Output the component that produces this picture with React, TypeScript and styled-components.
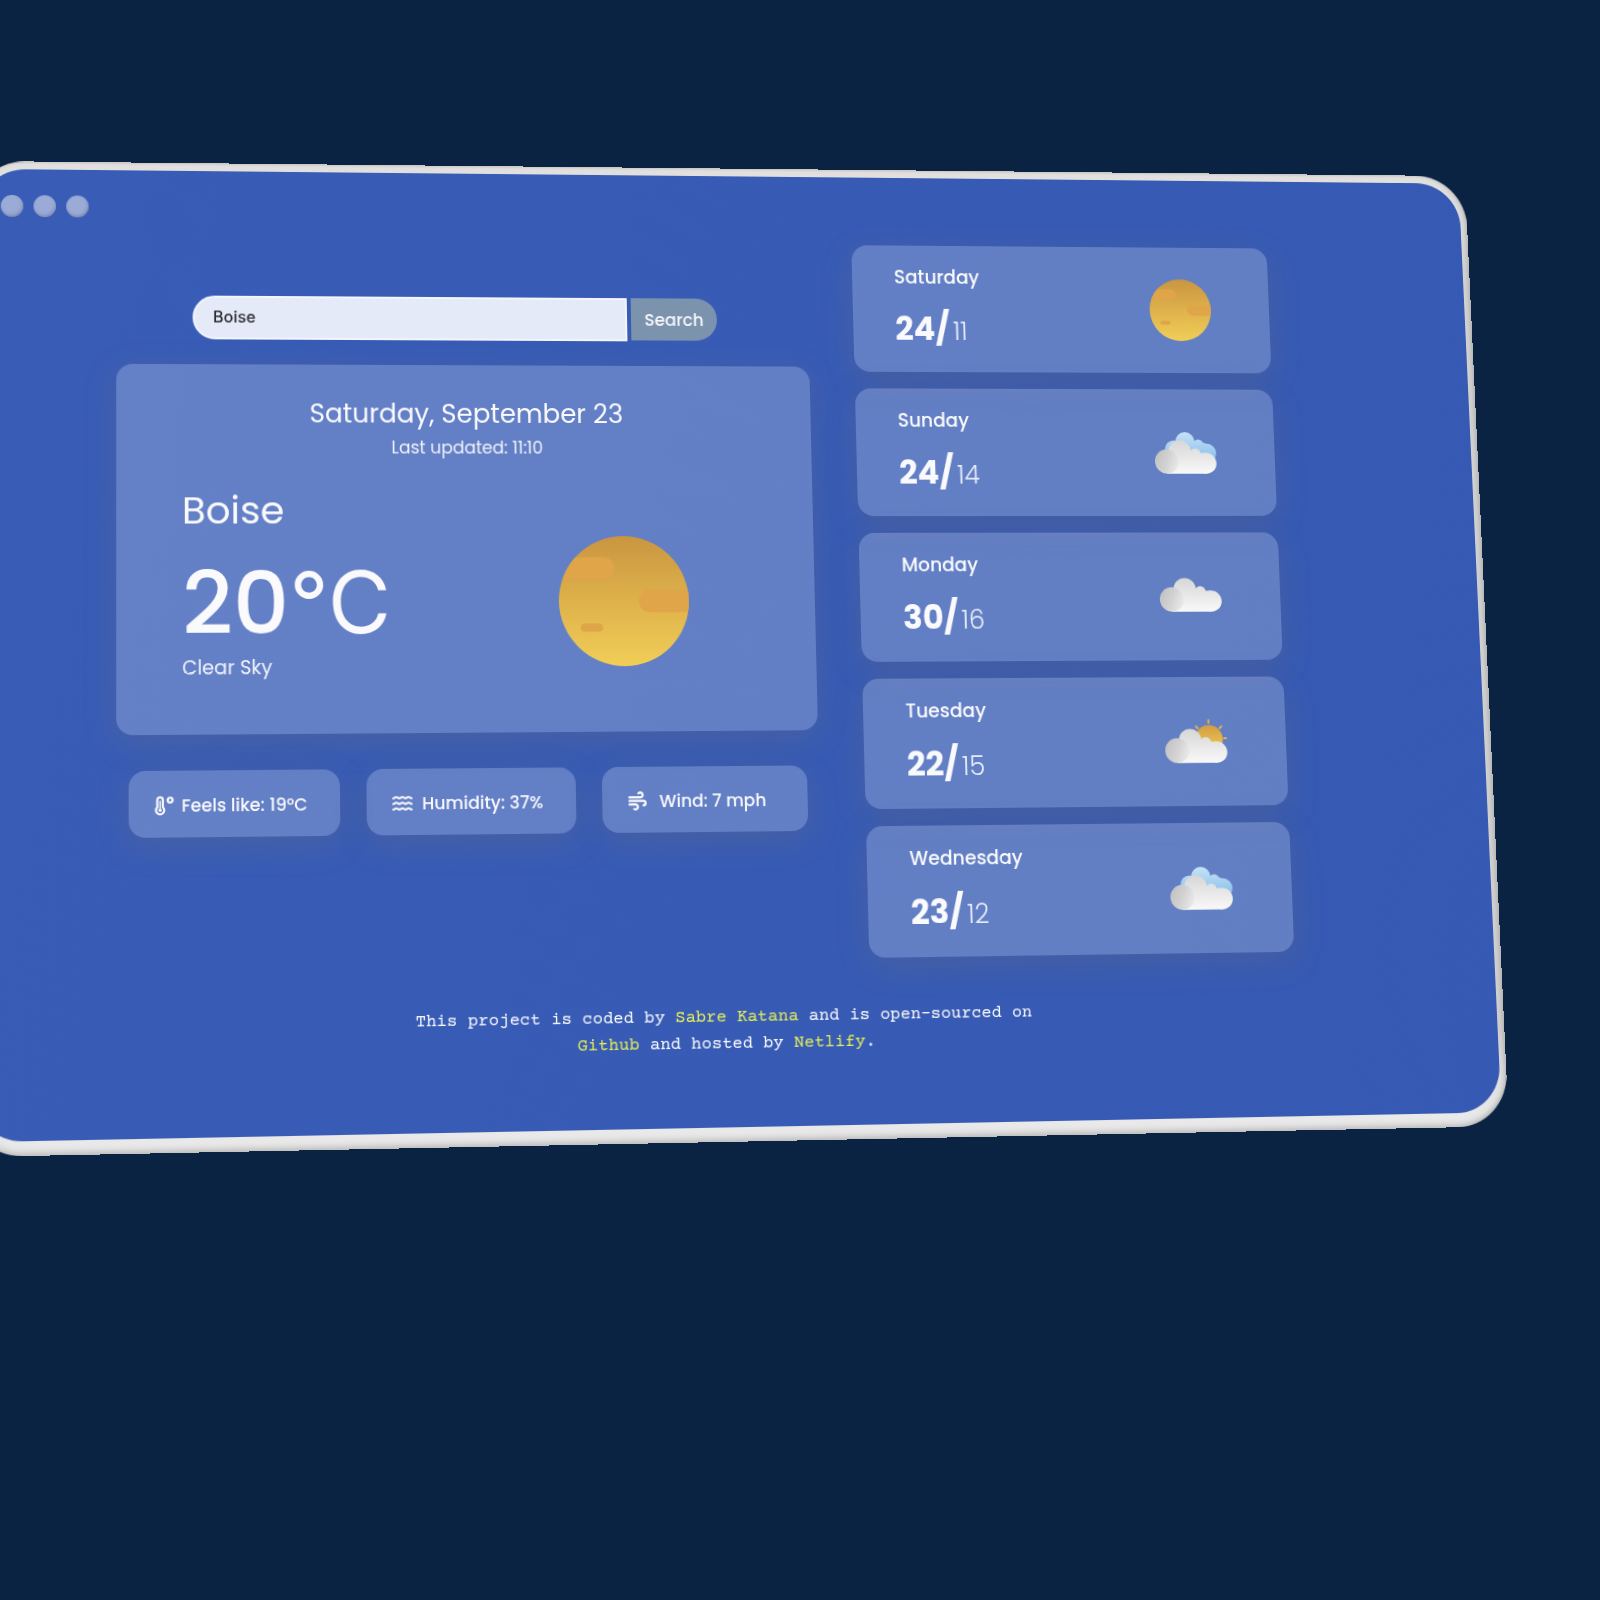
import React from "react";
import styled, { createGlobalStyle } from "styled-components";

const GlobalStyle = createGlobalStyle`
  *, *::before, *::after { box-sizing: border-box; }
  html, body { margin: 0; min-height: 100%; background: #0a2342; }
  body {
    overflow-x: hidden;
    font-family: Poppins, Inter, "Open Sans", sans-serif;
    color: #fafafc;
  }
  h1, h2, p, dl, dd, dt, ul { margin: 0; padding: 0; font-weight: 400; }
`;

/* Stage clips the tilted browser mockup where it leaves the page. */
const Stage = styled.div`
  overflow: hidden;
  padding-bottom: 80px;
`;

const Bezel = styled.div`
  margin: 161px 92px 0 -18px;
  padding: 8px 7px 14px;
  border-radius: 53px;
  background: linear-gradient(to bottom, #e2e1e0, #d3d3d3 10%, #d0d0d0 90%, #ececec);
  box-shadow:
    inset -3px 0 4px -1px rgba(120, 120, 120, 0.3),
    inset 0 -6px 6px -3px rgba(90, 90, 90, 0.3),
    inset 0 2px 2px -1px rgba(110, 110, 110, 0.2);
  transform-origin: 640px 439px;
  transform: matrix3d(
    1, -0.0032, 0, 0.000031,
    0.0172, 1, 0, -0.0000339,
    0, 0, 1, 0,
    0, 0, 0, 1
  );
`;

const Screen = styled.div`
  display: flex;
  flex-direction: column;
  border-radius: 46px;
  background: linear-gradient(100deg, #395db7, #365ab3);
  padding-bottom: 67px;
`;

const TitleBar = styled.div`
  display: flex;
  gap: 10px;
  padding: 26px 22px 0;
`;

const Dot = styled.span`
  width: 22px;
  height: 22px;
  border-radius: 50%;
  background: #9babd8;
  box-shadow: inset -1px -2px 3px rgba(110, 115, 150, 0.5);
`;

const Dashboard = styled.main`
  display: grid;
  grid-template-columns: 692fr 432fr;
  gap: 46px;
  padding: 22px 207px 0 135px;
`;

const glass = `
  border-radius: 16px;
  background: rgba(255, 255, 255, 0.22);
  box-shadow: 0 8px 32px rgba(130, 115, 95, 0.22);
`;

const Current = styled.section`
  padding-top: 56px;
`;

const SearchForm = styled.form`
  display: flex;
  gap: 4px;
  margin: 0 93px 25px 75px;
`;

const SearchInput = styled.input`
  flex: 1;
  min-width: 0;
  height: 44px;
  padding: 0 18px 2px;
  border: 2px solid #f3f5fa;
  border-radius: 22px 0 0 22px;
  background: #e4eaf7;
  color: #2c2c2e;
  font: 500 16px Inter, sans-serif;
  outline: none;
`;

const SearchButton = styled.button`
  width: 87px;
  height: 43px;
  padding: 0;
  border: 0;
  border-radius: 0 22px 22px 0;
  background: #7c93ae;
  color: #f4f6fa;
  font: inherit;
  font-size: 17px;
  font-weight: 500;
`;

const CurrentCard = styled.article`
  ${glass}
  padding: 31px 64px 51px;
`;

const DateLine = styled.h2`
  font-size: 26px;
  line-height: 36px;
  text-align: center;
`;

const Updated = styled.p`
  margin-top: 4px;
  font-size: 17px;
  line-height: 24px;
  text-align: center;
  color: #f0f3fa;
`;

const Hero = styled.div`
  display: flex;
  align-items: center;
  justify-content: space-between;
  margin-top: 27px;
  padding-right: 63px;
`;

const City = styled.h1`
  font-size: 38px;
  line-height: 48px;
`;

const Temperature = styled.p`
  margin-top: 20px;
  font-size: 86px;
  font-weight: 500;
  line-height: 96px;
`;

const Unit = styled.span`
  font-family: Inter, sans-serif;
  font-size: 85px;
  font-weight: 400;
  line-height: 1;
`;

const Sky = styled.p`
  margin-top: 2px;
  font-size: 19px;
  line-height: 28px;
  color: #f0f3fa;
`;

const HeroIcon = styled.div`
  margin-top: 36px;
  svg { display: block; width: 130px; height: 130px; }
`;

const Details = styled.ul`
  display: grid;
  grid-template-columns: repeat(3, 1fr);
  gap: 26px;
  margin-top: 35px;
  padding: 0 12px;
  list-style: none;
`;

const Detail = styled.li<{ $gap: number }>`
  ${glass}
  display: flex;
  align-items: center;
  gap: ${(p) => p.$gap}px;
  height: 65px;
  padding: 2px 0 0 25px;
  font-size: 17px;
  font-weight: 500;
  white-space: nowrap;
  svg { flex: none; width: 20px; height: 20px; }
`;

const Forecast = styled.section`
  display: flex;
  flex-direction: column;
  gap: 17px;
`;

const DayCard = styled.article`
  ${glass}
  display: flex;
  align-items: center;
  justify-content: space-between;
  height: 130px;
  padding: 0 61px 0 43px;
  svg { display: block; width: 64px; height: 64px; }
`;

const DayText = styled.div`
  padding-top: 5px;
`;

const DayName = styled.h2`
  font-size: 19px;
  font-weight: 500;
  line-height: 28px;
`;

const Range = styled.p`
  margin-top: 15px;
  line-height: 48px;
`;

const High = styled.strong`
  font-size: 33px;
  font-weight: 700;
`;

const Low = styled.span`
  margin-left: 3px;
  font-size: 26px;
  font-weight: 300;
  color: #e6ebf7;
`;

const Footer = styled.footer`
  margin: 44px 53px 0 0;
  font-family: "Courier Prime", "Liberation Mono", monospace;
  font-size: 17px;
  line-height: 26px;
  text-align: center;
  p { max-width: 650px; margin: 0 auto; }
`;

const FooterLink = styled.a`
  color: #e4ec58;
  text-decoration: none;
`;

function Sun() {
  return (
    <svg viewBox="0 0 128 128" aria-hidden="true">
      <defs>
        <linearGradient id="sunFill" x1="0" y1="0" x2="0" y2="1">
          <stop offset="0" stopColor="#ca9540" />
          <stop offset="1" stopColor="#f1ce57" />
        </linearGradient>
        <clipPath id="sunClip"><circle cx="64" cy="64" r="64" /></clipPath>
      </defs>
      <circle cx="64" cy="64" r="64" fill="url(#sunFill)" />
      <g clipPath="url(#sunClip)" fill="#dfa548">
        <rect x="-20" y="21" width="75" height="22" rx="10" />
        <rect x="79" y="53" width="70" height="22" rx="10" />
        <rect x="21" y="86" width="22" height="8" rx="4" />
      </g>
    </svg>
  );
}

function CloudDefs() {
  return (
    <defs>
      <linearGradient id="cloudFill" gradientUnits="userSpaceOnUse" x1="0" y1="19" x2="0" y2="54">
        <stop offset="0" stopColor="#d6d6d6" />
        <stop offset="1" stopColor="#f9f9f9" />
      </linearGradient>
      <linearGradient id="cloudShade" x1="0" y1="0.3" x2="1" y2="0.7">
        <stop offset="0" stopColor="#c2c2c2" />
        <stop offset="0.5" stopColor="#d2d2d2" />
        <stop offset="1" stopColor="#ebebeb" />
      </linearGradient>
      <linearGradient id="backCloud" gradientUnits="userSpaceOnUse" x1="0" y1="11" x2="0" y2="42">
        <stop offset="0" stopColor="#c6e2f7" />
        <stop offset="1" stopColor="#83bdea" />
      </linearGradient>
      <linearGradient id="peekSun" x1="0" y1="0" x2="0" y2="1">
        <stop offset="0" stopColor="#d39d42" />
        <stop offset="1" stopColor="#f1ce57" />
      </linearGradient>
    </defs>
  );
}

function FrontCloud() {
  return (
    <g>
      <g fill="url(#cloudFill)">
        <circle cx="26" cy="31" r="11.5" />
        <circle cx="42" cy="33.5" r="5.7" />
        <circle cx="53.2" cy="43" r="10.7" />
        <path d="M12 53.7 L16 30 H40 L46 32.4 H53 V53.7 Z" />
      </g>
      <circle cx="12.3" cy="41.2" r="12.4" fill="url(#cloudShade)" />
    </g>
  );
}

function Cloud() {
  return (
    <svg viewBox="0 6 64 64" aria-hidden="true">
      <CloudDefs />
      <FrontCloud />
    </svg>
  );
}

function Overcast() {
  return (
    <svg viewBox="0 0 64 64" aria-hidden="true">
      <CloudDefs />
      <g fill="url(#backCloud)">
        <circle cx="20.3" cy="29" r="9.6" />
        <circle cx="31.8" cy="21" r="10" />
        <circle cx="45.5" cy="23.8" r="5.2" />
        <circle cx="54.3" cy="32.5" r="9.7" />
        <path d="M20 20 H46 L54 23 V42 H20 Z" />
      </g>
      <FrontCloud />
    </svg>
  );
}

function PartlySunny() {
  return (
    <svg viewBox="0 0 64 64" aria-hidden="true">
      <CloudDefs />
      <circle cx="45.5" cy="30" r="14.2" fill="url(#peekSun)" />
      <g stroke="#e3b54c" strokeWidth="1.9" strokeLinecap="round">
        <path d="M45.5 10.8 V13.6" />
        <path d="M32.4 17 L34.3 19" />
        <path d="M58.7 17 L56.8 19" />
        <path d="M61 29 H63.1" />
      </g>
      <FrontCloud />
    </svg>
  );
}

function Thermometer() {
  return (
    <svg viewBox="0 0 20 20" fill="none" stroke="#fafafc" strokeWidth="2.1" aria-hidden="true">
      <path d="M2.6 4.4 a2.7 2.7 0 0 1 5.4 0 V11.4 a4 4 0 1 1 -5.4 0 Z" />
      <path d="M5.3 5.6 V13" strokeWidth="1.3" strokeLinecap="round" />
      <circle cx="5.3" cy="14.3" r="1.6" fill="#fafafc" stroke="none" />
      <circle cx="15" cy="4.6" r="2.4" />
    </svg>
  );
}

function Humidity() {
  return (
    <svg viewBox="0 0 20 20" fill="none" stroke="#fafafc" strokeWidth="2" strokeLinecap="round" aria-hidden="true">
      {[4, 9.5, 15].map((y) => (
        <path key={y} d={`M1 ${y + 1} c1.5 0 1.5 -1.3 3 -1.3 s1.5 1.3 3 1.3 s1.5 -1.3 3 -1.3 s1.5 1.3 3 1.3 s1.5 -1.3 3 -1.3 s1.5 1.3 3 1.3`} />
      ))}
    </svg>
  );
}

function Wind() {
  return (
    <svg viewBox="0 0 20 20" fill="none" stroke="#fafafc" strokeWidth="2.2" strokeLinecap="round" aria-hidden="true">
      <path d="M2 6.2 H13 a2.4 2.4 0 1 0 -2 -4" />
      <path d="M2 9.7 H15.6 a2.2 2.2 0 0 1 0.3 4.4" />
      <path d="M2 13.2 H8.2 a2.4 2.4 0 1 1 -1.6 4.4" />
    </svg>
  );
}

const days = [
  { name: "Saturday", high: 24, low: 11, Icon: Sun },
  { name: "Sunday", high: 24, low: 14, Icon: Overcast },
  { name: "Monday", high: 30, low: 16, Icon: Cloud },
  { name: "Tuesday", high: 22, low: 15, Icon: PartlySunny },
  { name: "Wednesday", high: 23, low: 12, Icon: Overcast },
];

export default function App() {
  return (
    <>
      <GlobalStyle />
      <Stage>
        <Bezel>
          <Screen>
            <TitleBar>
              <Dot />
              <Dot />
              <Dot />
            </TitleBar>
            <Dashboard>
              <Current>
                <SearchForm onSubmit={(e) => e.preventDefault()}>
                  <SearchInput aria-label="City" type="text" defaultValue="Boise" />
                  <SearchButton type="submit">Search</SearchButton>
                </SearchForm>
                <CurrentCard>
                  <DateLine>Saturday, September 23</DateLine>
                  <Updated>Last updated: 11:10</Updated>
                  <Hero>
                    <div>
                      <City>Boise</City>
                      <Temperature>20<Unit>°C</Unit></Temperature>
                      <Sky>Clear Sky</Sky>
                    </div>
                    <HeroIcon><Sun /></HeroIcon>
                  </Hero>
                </CurrentCard>
                <Details>
                  <Detail $gap={6}><Thermometer />Feels like: 19°C</Detail>
                  <Detail $gap={9}><Humidity />Humidity: 37%</Detail>
                  <Detail $gap={12}><Wind />Wind: 7 mph</Detail>
                </Details>
              </Current>
              <Forecast>
                {days.map(({ name, high, low, Icon }) => (
                  <DayCard key={name}>
                    <DayText>
                      <DayName>{name}</DayName>
                      <Range><High>{high}/</High><Low>{low}</Low></Range>
                    </DayText>
                    <Icon />
                  </DayCard>
                ))}
              </Forecast>
            </Dashboard>
            <Footer>
              <p>
                This project is coded by <FooterLink href="#sabre-katana">Sabre Katana</FooterLink> and is
                open-sourced on <FooterLink href="#github">Github</FooterLink> and hosted by{" "}
                <FooterLink href="#netlify">Netlify</FooterLink>.
              </p>
            </Footer>
          </Screen>
        </Bezel>
      </Stage>
    </>
  );
}
